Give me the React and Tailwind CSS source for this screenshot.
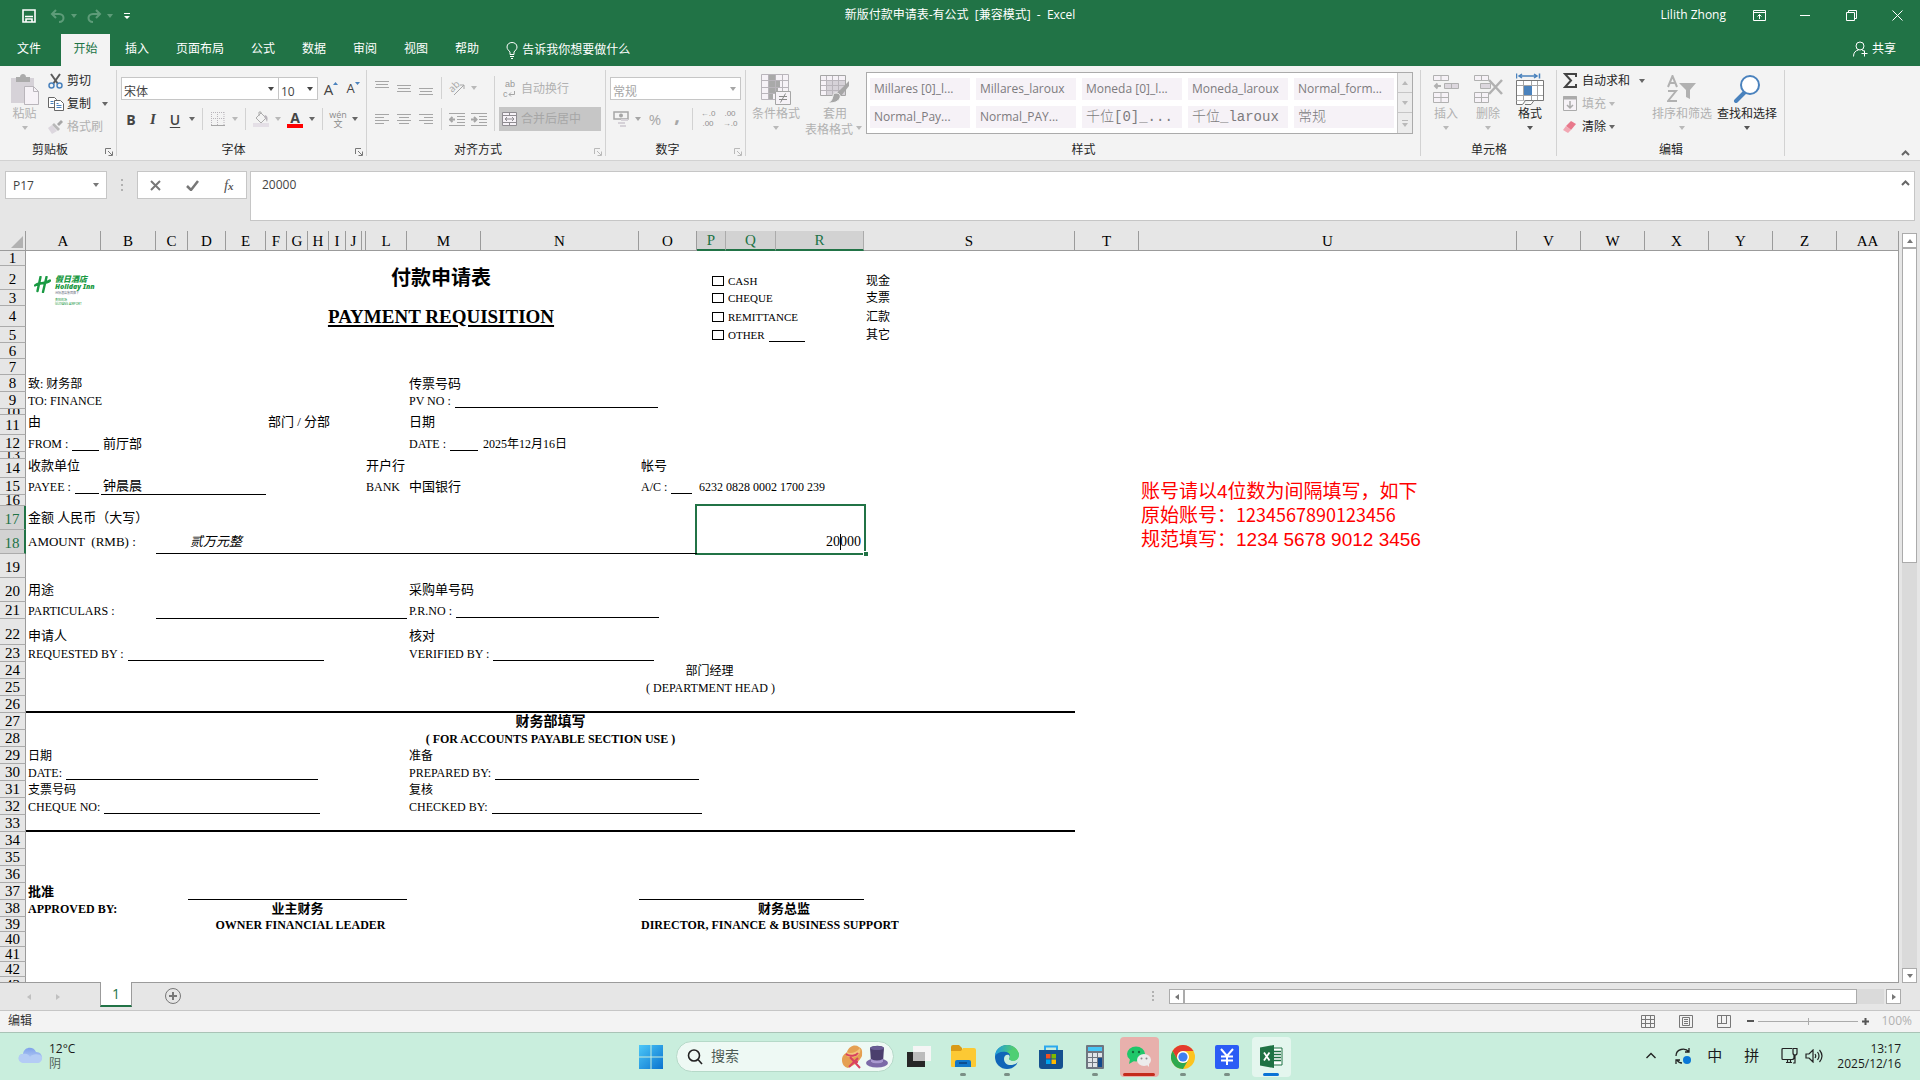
import clsx from "clsx";

const UI_FONT = "font-['Open_Sans','Noto_Sans_CJK_SC',sans-serif]";
const SHEET_FONT = "font-['Liberation_Serif','Noto_Sans_CJK_SC',serif]";

const COLUMNS = [
  ["A", 75],
  ["B", 55],
  ["C", 32],
  ["D", 38],
  ["E", 40],
  ["F", 21],
  ["G", 21],
  ["H", 21],
  ["I", 17],
  ["J", 16],
  ["K", 4],
  ["L", 41],
  ["M", 74],
  ["N", 158],
  ["O", 58],
  ["P", 29],
  ["Q", 50],
  ["R", 88],
  ["S", 211],
  ["T", 64],
  ["U", 378],
  ["V", 64],
  ["W", 64],
  ["X", 64],
  ["Y", 64],
  ["Z", 64],
  ["AA", null],
];
const NAMES = COLUMNS.map(([name]) => name);

const ROW_HEIGHTS = [
  15, 24, 16, 21, 16, 16, 16, 17, 17, 6, 20, 17, 7, 19, 17, 11, 24, 24, 24, 24,
  17, 26, 17, 17, 17, 17, 17, 17, 17, 17, 17, 17, 17, 17, 17, 17, 17, 17, 15,
  15, 15, 15, 17,
];

// cell borders: row -> [first column, last column, class]
const LINES = {
  15: [["B", "E", "border-b"]],
  18: [["C", "O", "border-b"]],
  21: [["C", "L", "border-b"]],
  26: [["A", "S", "border-b-2"]],
  33: [["A", "S", "border-b-2"]],
  37: [
    ["D", "L", "border-b"],
    ["O", "R", "border-b"],
  ],
};

const CELLS = {
  A2: { node: <HotelLogo /> },
  C2: { text: "付款申请表", cols: 14, cn: "justify-center text-[20px] font-bold" },
  C4: {
    text: "PAYMENT REQUISITION",
    cols: 14,
    cn: "justify-center text-[19px] font-bold underline decoration-2 underline-offset-2",
  },
  Q2: { node: <PayType label="CASH" />, cn: "items-end pb-0.5" },
  Q3: { node: <PayType label="CHEQUE" /> },
  Q4: { node: <PayType label="REMITTANCE" /> },
  Q5: { node: <PayType label="OTHER" />, blank: 36 },
  S2: { text: "现金", cn: "items-end pb-0.5 text-[12px]" },
  S3: { text: "支票", cn: "text-[12px]" },
  S4: { text: "汇款", cn: "text-[12px]" },
  S5: { text: "其它", cn: "text-[12px]" },
  A8: { text: "致: 财务部", cn: "text-[12px]" },
  A9: { text: "TO: FINANCE", cn: "text-[12px]" },
  M8: { text: "传票号码" },
  M9: { text: "PV NO :", cn: "text-[12px]", blank: 203 },
  A11: { text: "由", cn: "items-start" },
  F11: { text: "部门 / 分部", cn: "items-start" },
  M11: { text: "日期", cn: "items-start" },
  A12: { text: "FROM :", cn: "text-[12px]", blank: 27 },
  B12: { text: "前厅部" },
  M12: { text: "DATE :", cn: "text-[12px]", blank: 28 },
  N12: { text: "2025年12月16日", cn: "text-[12px]" },
  A14: { text: "收款单位", cn: "items-start" },
  L14: { text: "开户行", cn: "items-start px-0" },
  O14: { text: "帐号", cn: "items-start" },
  A15: { text: "PAYEE :", cn: "text-[12px]", blank: 24 },
  B15: { text: "钟晨晨" },
  L15: { text: "BANK", cn: "text-[12px] px-0" },
  M15: { text: "中国银行" },
  O15: { text: "A/C :", cn: "text-[12px]", blank: 21 },
  P15: { text: "6232 0828 0002 1700 239", cn: "text-[12px]" },
  U15: { node: <AccountNote />, rows: 4 },
  A17: { text: "金额 人民币（大写）" },
  P17: { node: <EditedCell />, cols: 3, rows: 2, cn: "items-stretch" },
  A18: { text: "AMOUNT  (RMB) :" },
  D18: { text: "贰万元整", cn: "italic" },
  A20: { text: "用途" },
  M20: { text: "采购单号码" },
  A21: { text: "PARTICULARS :", cn: "text-[12px]" },
  M21: { text: "P.R.NO :", cn: "text-[12px]", blank: 203 },
  A22: { text: "申请人", cn: "items-end pb-0.5" },
  M22: { text: "核对", cn: "items-end pb-0.5" },
  A23: { text: "REQUESTED BY :", cn: "text-[12px]", blank: 196 },
  M23: { text: "VERIFIED BY :", cn: "text-[12px]", blank: 161 },
  O24: { text: "部门经理", cols: 3, cn: "justify-center pl-1.5 text-[12px]" },
  O25: { text: "( DEPARTMENT HEAD )", cols: 3, cn: "justify-center pl-2 text-[12px]" },
  A27: { text: "财务部填写", cols: 19, cn: "justify-center text-[14px] font-bold" },
  A28: {
    text: "( FOR ACCOUNTS PAYABLE SECTION USE )",
    cols: 19,
    cn: "justify-center text-[12px] font-bold",
  },
  A29: { text: "日期", cn: "text-[12px]" },
  M29: { text: "准备", cn: "text-[12px]" },
  A30: { text: "DATE:", cn: "text-[12px]", blank: 252 },
  M30: { text: "PREPARED BY:", cn: "text-[12px]", blank: 204 },
  A31: { text: "支票号码", cn: "text-[12px]" },
  M31: { text: "复核", cn: "text-[12px]" },
  A32: { text: "CHEQUE NO:", cn: "text-[12px]", blank: 216 },
  M32: { text: "CHECKED BY:", cn: "text-[12px]", blank: 210 },
  A37: { text: "批准", cn: "font-bold" },
  A38: { text: "APPROVED BY:", cn: "text-[12px] font-bold" },
  D38: { text: "业主财务", cols: 9, cn: "justify-center font-bold" },
  Q38: { text: "财务总监", cn: "pl-8 font-bold" },
  D39: {
    text: "OWNER FINANCIAL LEADER",
    cols: 9,
    cn: "justify-center pl-2 text-[12px] font-bold",
  },
  O39: {
    text: "DIRECTOR, FINANCE & BUSINESS SUPPORT",
    cn: "text-[12px] font-bold",
  },
};

// addresses hidden under a merged cell
const COVERED = new Set();
Object.entries(CELLS).forEach(([key, { cols = 1, rows = 1 }]) => {
  const [, col, row] = key.match(/([A-Z]+)(\d+)/);
  const start = NAMES.indexOf(col);
  for (let r = 0; r < rows; r++) {
    for (let c = 0; c < cols; c++) {
      if (r || c) COVERED.add(NAMES[start + c] + (Number(row) + r));
    }
  }
});

function lineClass(index, row) {
  const hit = LINES[row]?.find(
    ([from, to]) => index >= NAMES.indexOf(from) && index <= NAMES.indexOf(to),
  );
  return hit?.[2];
}

/* ---------- sheet content ---------- */

function HotelLogo() {
  return (
    <div className="absolute top-2 left-2 flex gap-1 text-[#1a9a43]">
      <svg width="17" height="17" viewBox="0 0 17 17" className="mt-0.5">
        <path
          d="M6.5 1 3.5 15M12.5 1 9 16M1 9.5C5 5.5 11 9 16 4.5"
          fill="none"
          stroke="currentColor"
          strokeWidth="2.4"
          strokeLinecap="round"
        />
      </svg>
      <div className="font-['Noto_Sans','Noto_Sans_CJK_SC',sans-serif]">
        <div className="text-[8px] leading-[9px] font-black italic">假日酒店</div>
        <div className="text-[7px] leading-[8px] font-black italic">Holiday Inn</div>
        <div className="text-[3px] leading-[5px] text-gray-500">洲际酒店集团旗下</div>
        <div className="mt-0.5 text-[3px] leading-[4px]">贵阳机场</div>
        <div className="text-[3px] leading-[4px]">GUIYANG AIRPORT</div>
      </div>
    </div>
  );
}

function PayType({ label }) {
  return (
    <label className="relative flex items-center text-[11px]">
      <input
        type="checkbox"
        className="absolute -left-4 h-2.5 w-3 appearance-none border border-black bg-white"
      />
      {label}
    </label>
  );
}

function AccountNote() {
  return (
    <div className="font-['Liberation_Sans','Noto_Sans_CJK_SC',sans-serif] text-[19px] leading-[24px] text-[#ff0000]">
      <div>账号请以4位数为间隔填写，如下</div>
      <div>
        原始账号：
        <span className="font-['Noto_Sans_CJK_SC',sans-serif] text-[18px] leading-none">
          1234567890123456
        </span>
      </div>
      <div>规范填写：1234 5678 9012 3456</div>
    </div>
  );
}

function EditedCell() {
  return (
    <div className="relative flex w-full items-end justify-end pb-1">
      <div className="pointer-events-none absolute -inset-x-1 -top-0.5 -bottom-px border-2 border-[#217346]" />
      <div className="absolute -right-1.5 -bottom-0.5 size-[5px] border-t border-l border-white bg-[#217346]" />
      <input
        aria-label="P17"
        defaultValue="20000"
        className="w-32 pr-px text-right text-[14px] leading-[16px] outline-none"
      />
      <div className="absolute right-[21px] bottom-1 h-4 w-px bg-black" />
    </div>
  );
}

function Cell({ index, row }) {
  const key = NAMES[index] + row;
  if (COVERED.has(key)) return null;

  const cell = CELLS[key];
  const line = lineClass(index, row);
  if (!cell && !line) return <td className="p-0" />;

  const { text, node, blank, cols, rows = 1, cn } = cell ?? {};
  const height = ROW_HEIGHTS.slice(row - 1, row - 1 + rows).reduce((a, b) => a + b);

  return (
    <td className="p-0" colSpan={cols} rowSpan={rows}>
      <div
        style={{ height }}
        className={clsx(
          "relative flex gap-1 border-black leading-[14px] whitespace-pre",
          !cn?.includes("px-0") && "px-0.5",
          !cn?.includes("items-") && "items-center",
          !cn?.includes("text-[") && "text-[13px]",
          line,
          cn,
        )}
      >
        {node ?? text}
        {blank && (
          <span style={{ width: blank }} className="h-3.5 shrink-0 border-b border-black" />
        )}
      </div>
    </td>
  );
}

function Sheet() {
  return (
    <div className="min-w-0 flex-1 overflow-hidden border-r border-b border-[#9b9b9b] bg-white">
      <table className={clsx("w-full table-fixed border-collapse text-black", SHEET_FONT)}>
        <colgroup>
          <col style={{ width: 26 }} />
          {COLUMNS.map(([name, width]) => (
            <col key={name} style={width ? { width } : undefined} />
          ))}
        </colgroup>
        <thead>
          <tr>
            <th className="p-0">
              <div className="flex h-5 items-end justify-end border-r border-b border-[#9b9b9b] bg-[#e6e6e6] p-0.5">
                <svg width="12" height="12" viewBox="0 0 12 12">
                  <path d="M12 0v12H0z" fill="#b1b1b1" />
                </svg>
              </div>
            </th>
            {NAMES.map((name) => {
              const active = ["P", "Q", "R"].includes(name);
              return (
                <th key={name} className="p-0 font-normal">
                  <div
                    className={clsx(
                      "flex h-5 items-center justify-center overflow-hidden text-[15px] leading-[18px]",
                      name !== "AA" && "border-r",
                      active
                        ? "border-b-2 border-r-[#ababab] border-b-[#217346] bg-[#d2d2d2] text-[#217346]"
                        : "border-b border-[#9b9b9b] bg-[#e6e6e6]",
                    )}
                  >
                    {name !== "K" && name}
                  </div>
                </th>
              );
            })}
          </tr>
        </thead>
        <tbody>
          {ROW_HEIGHTS.map((height, i) => {
            const row = i + 1;
            const active = row === 17 || row === 18;
            return (
              <tr key={row}>
                <th className="p-0 font-normal">
                  <div
                    style={{ height }}
                    className={clsx(
                      "flex justify-center overflow-hidden border-b border-b-[#ababab] text-[15px] leading-[16px]",
                      height > 20 ? "items-end pb-0.5" : "items-center",
                      active
                        ? "border-r-2 border-r-[#217346] bg-[#d2d2d2] text-[#217346]"
                        : "border-r border-r-[#9b9b9b] bg-[#e6e6e6]",
                    )}
                  >
                    {row}
                  </div>
                </th>
                {NAMES.map((name, index) => (
                  <Cell key={name} index={index} row={row} />
                ))}
              </tr>
            );
          })}
        </tbody>
      </table>
    </div>
  );
}

/* ---------- small parts ---------- */

function Arrow({ className }) {
  return (
    <span className={clsx("flex w-3 shrink-0 justify-center", className)}>
      <svg width="6" height="4" viewBox="0 0 6 4">
        <path d="M0 0h6L3 4z" fill="currentColor" />
      </svg>
    </span>
  );
}

function Sep() {
  return <span className="mx-1 h-[22px] w-px shrink-0 bg-[#d2d2d2]" />;
}

function Tool({ label, children, className }) {
  return (
    <button
      aria-label={label}
      className={clsx("flex h-6 w-[22px] shrink-0 items-center justify-center", className)}
    >
      {children}
    </button>
  );
}

function Group({ title, launcher, className, children }) {
  return (
    <section className={clsx("relative flex shrink-0 flex-col", className)}>
      <div className="flex h-[74px]">{children}</div>
      <div
        className={clsx(
          "flex h-5 items-center justify-center text-[12px] text-[#262626]",
          launcher && "pr-[17px]",
        )}
      >
        {title}
      </div>
      {launcher && (
        <svg width="8" height="8" viewBox="0 0 8 8" className={clsx("absolute right-1 bottom-1", launcher)}>
          <path d="M.5 6V.5H6M3 3l4 4M7.5 3.5v4h-4" fill="none" stroke="currentColor" />
        </svg>
      )}
      <span className="absolute top-1 right-0 bottom-1 w-px bg-[#d2d2d2]" />
    </section>
  );
}

function BigButton({ icon, label, label2, disabled, className }) {
  return (
    <button
      className={clsx(
        "flex flex-col items-center pt-[7px] text-[12px] leading-[18px] whitespace-nowrap",
        disabled ? "text-[#b1b1b1]" : "text-[#262626]",
        className,
      )}
    >
      <span className="flex h-8 items-center">{icon}</span>
      <span>{label}</span>
      <span className="flex h-2.5 items-center leading-[14px]">
        {label2}
        <Arrow className={disabled ? "text-[#b9b9b9]" : "text-[#555]"} />
      </span>
    </button>
  );
}

function SmallButton({ icon, label, arrow, disabled }) {
  return (
    <button
      className={clsx(
        "flex h-[23px] items-center text-[12px] whitespace-nowrap",
        disabled ? "text-[#b1b1b1]" : "text-[#262626]",
      )}
    >
      <span className="flex w-[19px] shrink-0">{icon}</span>
      {label}
      {arrow && <Arrow className={clsx(arrow, disabled ? "text-[#b9b9b9]" : "text-[#666]")} />}
    </button>
  );
}

function Dropdown({ label, value, className }) {
  return (
    <div className={clsx("relative h-[23px] border border-[#c6c6c6] bg-white", className)}>
      <select
        aria-label={label}
        className="h-full w-full appearance-none pb-[3px] pl-0.5 text-[12px] leading-[18px] outline-none"
      >
        <option>{value}</option>
      </select>
      <Arrow className="pointer-events-none absolute top-[9px] right-px" />
    </div>
  );
}

function Lines({ rows, width = 14, height = 14 }) {
  return (
    <svg width={width} height={height} viewBox={`0 0 ${width} ${height}`} stroke="#a6a6a6">
      {rows.map(([x, y, w]) => (
        <path key={y} d={`M${x} ${y + 0.5}h${w}`} />
      ))}
    </svg>
  );
}

/* ---------- title bar and tabs ---------- */

function TitleBar() {
  return (
    <header className="grid h-[34px] grid-cols-[1fr_auto_1fr] items-start text-[12px] leading-[30px] text-white">
      <div className="flex h-8 items-center pl-[22px]">
        <button aria-label="保存">
          <svg width="14" height="14" viewBox="0 0 14 14">
            <path d="M1 1h12v12H1z" fill="none" stroke="#fff" strokeWidth="1.6" />
            <path d="M3 7.5h8M4 13v-3h6v3" fill="none" stroke="#fff" strokeWidth="1.6" />
          </svg>
        </button>
        <button aria-label="撤消" className="ml-3.5 flex items-center text-[#5e9c79]">
          <svg width="16" height="14" viewBox="0 0 16 14" fill="none" stroke="currentColor" strokeWidth="2">
            <path d="M6 1 2 5l4 4M2 5h7c6 0 6 8 0 8" />
          </svg>
          <Arrow className="ml-0.5" />
        </button>
        <button aria-label="恢复" className="ml-1.5 flex items-center text-[#5e9c79]">
          <svg width="16" height="14" viewBox="0 0 16 14" fill="none" stroke="currentColor" strokeWidth="2">
            <path d="m10 1 4 4-4 4M14 5H7c-6 0-6 8 0 8" />
          </svg>
          <Arrow className="ml-0.5" />
        </button>
        <button aria-label="自定义快速访问工具栏" className="ml-2">
          <svg width="6" height="6" viewBox="0 0 6 6" fill="#fff">
            <path d="M0 0h6v1H0zM0 3h6L3 6z" />
          </svg>
        </button>
      </div>
      <h1 className="whitespace-pre">新版付款申请表-有公式  [兼容模式]  -  Excel</h1>
      <div className="flex h-[30px] items-center justify-end">
        <span className="pr-2.5">Lilith Zhong</span>
        <button aria-label="功能区显示选项" className="flex w-[46px] justify-center">
          <svg width="13" height="11" viewBox="0 0 13 11" fill="none" stroke="#fff">
            <path d="M.5.5h12v10H.5zM.5 2.5h12M6.5 9V4.5M4.5 6.5l2-2 2 2" />
          </svg>
        </button>
        <button aria-label="最小化" className="flex w-[46px] justify-center">
          <span className="h-px w-2.5 bg-white" />
        </button>
        <button aria-label="还原" className="flex w-[46px] justify-center">
          <svg width="11" height="11" viewBox="0 0 11 11" fill="none" stroke="#fff">
            <path d="M.5 2.5h8v8h-8zM2.5 2V.5h8v8H9" />
          </svg>
        </button>
        <button aria-label="关闭" className="flex w-[46px] justify-center">
          <svg width="11" height="11" viewBox="0 0 11 11" stroke="#fff">
            <path d="m.5.5 10 10M10.5.5l-10 10" />
          </svg>
        </button>
      </div>
    </header>
  );
}

function Tabs() {
  return (
    <nav className="flex h-8 gap-[3px] text-[12px] text-white">
      <button className="px-[17px] pb-0.5">文件</button>
      <button className="w-[49px] bg-[#f3f3f3] pb-0.5 text-[#217346]">开始</button>
      {["插入", "页面布局", "公式", "数据", "审阅", "视图", "帮助"].map((tab) => (
        <button key={tab} className="px-3 pb-0.5">
          {tab}
        </button>
      ))}
      <button className="flex items-center gap-1 pl-3">
        <svg width="12" height="17" viewBox="0 0 12 17" fill="none" stroke="#fff">
          <path d="M4 12.5h4V10c1-1.5 3-2.5 3-5 0-6-10-6-10 0 0 2.500 2 3.500 3 5zM4 14.500h4M5 16.500h2" />
        </svg>
        告诉我你想要做什么
      </button>
      <button className="mr-6 ml-auto flex items-center gap-1 pb-0.5">
        <svg width="15" height="16" viewBox="0 0 15 16" fill="none" stroke="#fff">
          <circle cx="7" cy="5" r="4" />
          <path d="M.5 15.500c0-4 2-6 5-6.500M9 9l2 1M11.500 9.500v6M8.500 12.500h6" />
        </svg>
        共享
      </button>
    </nav>
  );
}

/* ---------- ribbon ---------- */

function ClipboardGroup() {
  return (
    <Group title="剪贴板" launcher="text-[#777]" className="w-[117px]">
      <BigButton
        disabled
        className="ml-[5px] w-[39px]"
        label="粘贴"
        icon={
          <svg width="30" height="31" viewBox="0 0 30 31">
            <path d="M1 4h23v25H1z" fill="#d6d2d8" />
            <path d="M6 3h4c0-4 6-4 6 0h4v5H6z" fill="#ababab" />
            <path d="M14.500 12.500h9l5 5v13h-14z" fill="#f6f2f7" stroke="#b9b5bb" />
            <path d="M23.500 12.500v5h5" fill="none" stroke="#b9b5bb" />
          </svg>
        }
      />
      <div className="ml-1 flex flex-col items-start pt-[3px]">
        <SmallButton
          label="剪切"
          icon={
            <svg width="15" height="16" viewBox="0 0 15 16" fill="none">
              <path d="M3 1l7 10M12 1 5 11" stroke="#5a5a5a" strokeWidth="2" />
              <circle cx="3.500" cy="12.500" r="2.500" stroke="#4a82bd" strokeWidth="1.500" />
              <circle cx="11.500" cy="12.500" r="2.500" stroke="#4a82bd" strokeWidth="1.500" />
            </svg>
          }
        />
        <SmallButton
          label="复制"
          arrow="ml-2"
          icon={
            <svg width="16" height="14" viewBox="0 0 16 14" fill="#fff" stroke="#666">
              <path d="M.5.5h6l2 2v8h-8z" />
              <path d="M6.500 3.500h6l3 3v7h-9z" />
              <path d="M2.500 4.500h3M2.500 6.500h3M8.500 8.500h5M8.500 10.500h5M8.500 6.500h2" stroke="#4a82bd" />
            </svg>
          }
        />
        <SmallButton
          disabled
          label="格式刷"
          icon={
            <svg width="15" height="14" viewBox="0 0 15 14">
              <path d="m9 4 4-4 2 2-4 4z" fill="#a6a6a6" />
              <path d="m6 3 6 6-2 2-6-6z" fill="#b9b9b9" />
              <path d="m4 5 5 6-5 3-4-6z" fill="#dcd7de" />
            </svg>
          }
        />
      </div>
    </Group>
  );
}

function FontGroup() {
  return (
    <Group title="字体" launcher="text-[#777]" className="w-[250px]">
      <div className="flex flex-col gap-1.5 pt-[11px] pl-[3px]">
        <div className="flex h-6 items-start pl-px text-[#444]">
          <Dropdown label="字体" value="宋体" className="w-[158px]" />
          <Dropdown label="字号" value="10" className="-ml-px w-[40px]" />
          <Tool label="增大字号" className="ml-0.5 text-[15px]">
            A
            <svg width="5" height="3" viewBox="0 0 5 3" className="mb-3">
              <path d="M0 3h5L2.500 0z" fill="#4a82bd" />
            </svg>
          </Tool>
          <Tool label="减小字号" className="text-[13px]">
            A
            <svg width="5" height="3" viewBox="0 0 5 3" className="mb-3">
              <path d="M0 0h5L2.500 3z" fill="#4a82bd" />
            </svg>
          </Tool>
        </div>
        <div className="flex h-6 items-center text-[14px] text-[#444]">
          <Tool label="加粗" className="font-bold">B</Tool>
          <Tool label="倾斜" className="font-['Liberation_Serif',serif] text-[15px] font-bold italic">I</Tool>
          <Tool label="下划线" className="font-semibold underline underline-offset-2">U</Tool>
          <Arrow className="text-[#666]" />
          <Sep />
          <Tool label="边框">
            <svg width="14" height="14" viewBox="0 0 14 14" fill="none" stroke="#b9b5bb">
              <path d="M.5 0v13M6.500 0v13M13 0v13M0 .5h13M0 6.500h13" strokeDasharray="1 1" />
              <path d="M0 13.500h14" stroke="#a6a6a6" />
            </svg>
          </Tool>
          <Arrow className="text-[#b9b9b9]" />
          <Sep />
          <Tool label="填充颜色" className="w-6">
            <svg width="16" height="16" viewBox="0 0 16 16">
              <path d="M0 12h16v4H0z" fill="#e4dfe6" />
              <path d="m3 7 5-5 5 5-5 5zM6 5V1h2v2" fill="#f3f3f3" stroke="#ababab" />
              <path d="M12 4c3 1 3 4 2 7-1-2-1-3-3-5z" fill="#b9b5bb" />
            </svg>
          </Tool>
          <Arrow className="text-[#b9b9b9]" />
          <Tool label="字体颜色" className="w-5 flex-col">
            <span className="text-[14px] leading-[13px] font-bold">A</span>
            <span className="h-1 w-4 bg-[#ff0000]" />
          </Tool>
          <Arrow className="text-[#666]" />
          <Sep />
          <Tool label="显示或隐藏拼音字段" className="w-6 flex-col text-[#8a8a8a]">
            <span className="text-[9px] leading-[9px]">wén</span>
            <span className="text-[9px] leading-[10px]">文</span>
          </Tool>
          <Arrow className="text-[#666]" />
        </div>
      </div>
    </Group>
  );
}

function AlignGroup() {
  return (
    <Group title="对齐方式" launcher="text-[#b9b9b9]" className="w-[239px]">
      <div className="flex w-[123px] flex-col gap-1.5 pt-[11px] pl-1 text-[#b9b9b9]">
        <div className="flex h-6 items-center pb-0.5">
          <Tool label="顶端对齐"><Lines rows={[[0, 0, 14], [1, 3, 12], [0, 6, 14]]} /></Tool>
          <Tool label="垂直居中"><Lines rows={[[0, 4, 14], [1, 7, 12], [0, 10, 14]]} /></Tool>
          <Tool label="底端对齐"><Lines rows={[[0, 7, 14], [1, 10, 12], [0, 13, 14]]} /></Tool>
          <Sep />
          <Tool label="方向" className="w-5">
            <svg width="18" height="18" viewBox="0 0 18 18" className="overflow-visible">
              <text x="1" y="12" fontSize="10" fill="#a6a6a6" transform="rotate(-45 5 9)">ab</text>
              <path d="m6 16 10-10M16 10V6h-4" fill="none" stroke="#a6a6a6" />
            </svg>
          </Tool>
          <Arrow />
        </div>
        <div className="flex h-6 items-center">
          <Tool label="左对齐"><Lines rows={[[0, 2, 14], [0, 5, 9], [0, 8, 14], [0, 11, 9]]} /></Tool>
          <Tool label="居中"><Lines rows={[[0, 2, 14], [2, 5, 10], [0, 8, 14], [2, 11, 10]]} /></Tool>
          <Tool label="右对齐"><Lines rows={[[0, 2, 14], [5, 5, 9], [0, 8, 14], [5, 11, 9]]} /></Tool>
          <Sep />
          {["M6 6.500H1M3.500 4 1 6.500 3.500 9", "M0 6.500h5M3 4l2.500 2.500L3 9"].map((d, i) => (
            <Tool key={d} label={i ? "增加缩进量" : "减少缩进量"}>
              <svg width="16" height="13" viewBox="0 0 16 13" fill="none" stroke="#a6a6a6">
                <path d="M0 .5h16M8 3.500h8M8 6.500h8M8 9.500h8M0 12.500h16" />
                <path d={d} strokeWidth="2" />
              </svg>
            </Tool>
          ))}
        </div>
      </div>
      <span className="mx-1 mt-2.5 h-[55px] w-px bg-[#d2d2d2]" />
      <div className="flex flex-col gap-1.5 pt-[11px] text-[12px] text-[#b1b1b1]">
        <button className="flex h-6 items-center gap-1 pl-1">
          <span className="flex w-3.5 flex-col font-['Liberation_Sans',sans-serif] text-[9px] leading-[10px] text-[#999]">
            <span>ab</span>
            <span className="flex items-center">
              c
              <svg width="7" height="6" viewBox="0 0 7 6" fill="none" stroke="#a6a6a6">
                <path d="M6.500 0v3.500H1M3 1.500l-2 2 2 2" />
              </svg>
            </span>
          </span>
          自动换行
        </button>
        <button className="flex h-6 w-[102px] items-center gap-1 bg-[#c6c6c6] pl-[3px] text-[#a6a6a6]">
          <svg width="15" height="14" viewBox="0 0 15 14" fill="#f6f2f7" stroke="#8f8c91">
            <path d="M.5.500h14v13H.5zM.5 3.500h14M.5 10.500h14M7.500.500v3M7.500 10.500v3M3 7h9M5 5 3 7l2 2M10 5l2 2-2 2" />
          </svg>
          合并后居中
        </button>
      </div>
    </Group>
  );
}

function NumberGroup() {
  return (
    <Group title="数字" launcher="text-[#b9b9b9]" className="w-[140px]">
      <div className="flex flex-col gap-1.5 px-1 pt-[11px] text-[#a6a6a6]">
        <div className="h-6">
          <Dropdown label="数字格式" value="常规" className="w-[131px]" />
        </div>
        <div className="flex h-6 items-center">
          <Tool label="会计数字格式">
            <svg width="16" height="16" viewBox="0 0 16 16">
              <path d="M1 1h14v7H1z" fill="#f3f3f3" stroke="#a6a6a6" strokeWidth="1.500" />
              <circle cx="8" cy="4.500" r="2" fill="#a6a6a6" />
              <path d="M8 8h7v2H8zM5 11h7v2H5zM7 14h6v2H7z" fill="#d6d2d8" />
            </svg>
          </Tool>
          <Arrow />
          <Tool label="百分比样式" className="text-[15px]">%</Tool>
          <Tool label="千位分隔样式" className="pb-2 text-[20px] font-bold">,</Tool>
          <Sep />
          {[["←.0", ".00", "增加小数位数"], [".00", "→.0", "减少小数位数"]].map(([a, b, label]) => (
            <Tool
              key={label}
              label={label}
              className="flex-col font-['Liberation_Sans',sans-serif] text-[8px] leading-[10px] text-[#8f8f8f]"
            >
              <span>{a}</span>
              <span>{b}</span>
            </Tool>
          ))}
        </div>
      </div>
    </Group>
  );
}

const STYLES = [
  "Millares [0]_l...",
  "Millares_laroux",
  "Moneda [0]_l...",
  "Moneda_laroux",
  "Normal_form...",
  "Normal_Pay...",
  "Normal_PAY...",
  "千位[0]_...",
  "千位_laroux",
  "常规",
];

function StylesGroup() {
  return (
    <Group title="样式" className="w-[675px]">
      <BigButton
        disabled
        className="ml-0.5 w-14"
        label="条件格式"
        icon={
          <svg width="30" height="31" viewBox="0 0 30 31">
            <path d="M.5.500h27v25H.5z" fill="#f6f2f7" stroke="#b9b5bb" />
            <path d="M8 1h6v5H8zM8 7h11v6H8zM8 14h9v5H8zM8 20h4v5H8z" fill="#a9a9a9" />
            <path d="M7.500 1v24M14.500 1v24M21.500 1v24M1 6.500h26M1 13.500h26M1 19.500h26" stroke="#b9b5bb" />
            <path d="M14.500 17.500h15v13h-15z" fill="#f6f2f7" stroke="#a6a6a6" />
            <path d="M18 22.500h8M18 25.500h8M24.500 19.500l-5 9" stroke="#8a8a8a" />
          </svg>
        }
      />
      <BigButton
        disabled
        className="ml-0.5 w-[58px]"
        label="套用"
        label2={<span className="pt-1">表格格式</span>}
        icon={
          <svg width="30" height="28" viewBox="0 0 30 28">
            <path d="M.5.500h25v20H.5z" fill="#f6f2f7" stroke="#a6a6a6" />
            <path d="M7 6h18v14H7z" fill="#d6d2d8" />
            <path d="M6.500 1v19M12.500 1v19M18.500 1v19M1 5.500h24M1 10.500h24M1 15.500h24" stroke="#b9b5bb" />
            <path d="M29 6v5l-8 10-4-3z" fill="#a6a6a6" />
            <path d="M16 18c3 0 5 2 4 5-2 4-6 5-12 5 4-2 4-4 5-7 0-2 1-3 3-3z" fill="#a6a6a6" stroke="#f3f3f3" />
          </svg>
        }
      />
      <div className="mt-1.5 ml-0.5 flex h-[62px] border border-[#ababab] bg-white">
        <div className="grid grid-cols-5 gap-1.5 px-[3px] py-[5px]">
          {STYLES.map((name) => (
            <button
              key={name}
              className={clsx(
                "h-[22px] w-[100px] bg-[#f6f2f7] pl-1 text-left whitespace-nowrap text-[#7d7b7e]",
                /[一-龥]/.test(name)
                  ? "font-['Liberation_Mono','Noto_Sans_CJK_SC',monospace] text-[14px] leading-[20px] font-light"
                  : "text-[12px]",
              )}
            >
              {name}
            </button>
          ))}
        </div>
        <div className="grid w-[15px] grid-rows-3 divide-y divide-[#c6c6c6] border-l border-[#c6c6c6] bg-[#ececec] text-[#b9b9b9]">
          <button aria-label="上一行" className="flex items-center justify-center">
            <Arrow className="rotate-180" />
          </button>
          <button aria-label="下一行" className="flex items-center justify-center">
            <Arrow />
          </button>
          <button aria-label="其他" className="flex flex-col items-center justify-center gap-0.5">
            <span className="h-px w-1.5 bg-[#b9b9b9]" />
            <Arrow />
          </button>
        </div>
      </div>
    </Group>
  );
}

function CellsGroup() {
  return (
    <Group title="单元格" className="w-[136px]">
      <BigButton
        disabled
        className="ml-1 w-[42px]"
        label="插入"
        icon={
          <svg width="27" height="28" viewBox="0 0 27 28" fill="#f6f2f7" stroke="#b1b1b1">
            <path d="M.5.500h15v5H.5zM8 1v5M.5 17.500h15v10H.5zM8 18v9M1 22.500h14" />
            <path d="M11.500 8.500h14v5h-14zM18.500 9v4" fill="#dcd7de" />
            <path d="M8 11H2M4.500 8.500 2 11l2.500 2.500" strokeWidth="2" fill="none" />
          </svg>
        }
      />
      <BigButton
        disabled
        className="w-[42px]"
        label="删除"
        icon={
          <svg width="29" height="28" viewBox="0 0 29 28" fill="#f6f2f7" stroke="#b1b1b1">
            <path d="M.5.500h14v5H.5zM7.500 1v5M.5 17.500h14v10H.5zM7.500 18v9M1 22.500h13" />
            <path d="M6.500 8.500h10v5h-10z" fill="#dcd7de" />
            <path d="m15 5 13 14M28 5 15 19" strokeWidth="2.500" />
          </svg>
        }
      />
      <BigButton
        className="w-[42px]"
        label="格式"
        icon={
          <svg width="28" height="32" viewBox="0 0 28 32">
            <path d="M.5.500v5M23.500.500v5M3 3h18M6 1 3 3l3 2M18 1l3 2-3 2" fill="none" stroke="#4a82bd" strokeWidth="1.500" />
            <path d="M.5 7.500h27v20H.5z" fill="#fff" stroke="#777" />
            <path d="M7.500 8v19M15.500 8v19M21.500 8v19M1 12.500h26M1 22.500h26" stroke="#a6a6a6" />
            <path d="M8 13h8v9H8z" fill="#4a82bd" />
            <path d="M.5 27.500v4h6l3-4M9 31.500h6l3-4" fill="#fff" stroke="#777" />
          </svg>
        }
      />
    </Group>
  );
}

function EditGroup() {
  return (
    <Group title="编辑" className="w-[228px]">
      <div className="flex w-[93px] flex-col items-start pt-[3px] pl-1.5">
        <SmallButton
          label="自动求和"
          arrow="ml-1.5"
          icon={
            <svg width="14" height="15" viewBox="0 0 14 15" fill="none" stroke="#444" strokeWidth="2">
              <path d="M13 4V1H2l6 6.500L2 14h11v-3" />
            </svg>
          }
        />
        <SmallButton
          disabled
          label="填充"
          arrow
          icon={
            <svg width="14" height="15" viewBox="0 0 14 15" fill="#f6f2f7" stroke="#ababab">
              <path d="M.5.500h13v14H.5z" />
              <path d="M0 2h14" strokeWidth="3" />
              <path d="M7 5v7M4 9l3 3 3-3" strokeWidth="1.500" fill="none" />
            </svg>
          }
        />
        <SmallButton
          label="清除"
          arrow
          icon={
            <svg width="13" height="12" viewBox="0 0 13 12">
              <path d="m8 0 5 3-5 6-5-4z" fill="#e8788b" />
              <path d="m3 5 5 4-3 3-5-3z" fill="#f2a7b3" />
            </svg>
          }
        />
      </div>
      <BigButton
        disabled
        className="w-16"
        label="排序和筛选"
        icon={
          <svg width="30" height="28" viewBox="0 0 30 28" fill="none" stroke="#b1b1b1" strokeWidth="2">
            <path d="M1 12 5.500 1 10 12M3 8h5M1 16h8L1 26h9" />
            <path d="M12 8h17l-6 7v9l-4-2v-7z" fill="#b1b1b1" stroke="none" />
          </svg>
        }
      />
      <BigButton
        className="w-[66px]"
        label="查找和选择"
        icon={
          <svg width="28" height="28" viewBox="0 0 28 28" stroke="#4a82bd">
            <path d="m12 17-9 9" strokeWidth="4" strokeLinecap="round" />
            <circle cx="17" cy="10" r="9" fill="#fff" strokeWidth="2" />
          </svg>
        }
      />
    </Group>
  );
}

function Ribbon() {
  return (
    <div className="relative flex h-[95px] overflow-hidden border-b border-[#d2d2d2] bg-[#f3f3f3]">
      <ClipboardGroup />
      <FontGroup />
      <AlignGroup />
      <NumberGroup />
      <StylesGroup />
      <CellsGroup />
      <EditGroup />
      <button aria-label="折叠功能区" className="mr-2.5 mb-1 ml-auto self-end">
        <Chevron />
      </button>
    </div>
  );
}

function Chevron() {
  return (
    <svg width="9" height="6" viewBox="0 0 9 6" fill="none" stroke="#666" strokeWidth="2">
      <path d="m1 5 3.500-3.500L8 5" />
    </svg>
  );
}

function FormulaBar() {
  return (
    <div className="flex h-[70px] items-start pt-2.5 pr-[5px] pl-[5px] text-[12px] text-[#444]">
      <div className="relative h-7 w-[102px] border border-[#c6c6c6] bg-white">
        <input aria-label="名称框" defaultValue="P17" className="h-full w-20 pl-[7px] outline-none" />
        <Arrow className="absolute top-[11px] right-1 text-[#777]" />
      </div>
      <div className="mx-3.5 mt-2 flex w-0.5 flex-col gap-[3px]">
        <span className="size-0.5 bg-[#b1b1b1]" />
        <span className="size-0.5 bg-[#b1b1b1]" />
        <span className="size-0.5 bg-[#b1b1b1]" />
      </div>
      <div className="flex h-7 w-[110px] items-center justify-around border border-[#c6c6c6] bg-white">
        <button aria-label="取消">
          <svg width="11" height="11" viewBox="0 0 11 11" stroke="#777" strokeWidth="2">
            <path d="m1 1 9 9M10 1l-9 9" />
          </svg>
        </button>
        <button aria-label="输入">
          <svg width="13" height="11" viewBox="0 0 13 11" fill="none" stroke="#777" strokeWidth="2.500">
            <path d="m1 6 4 4 7-9" />
          </svg>
        </button>
        <button
          aria-label="插入函数"
          className="font-['Liberation_Serif',serif] text-[15px] leading-[16px] text-[#555] italic"
        >
          f<span className="text-[11px] font-bold">x</span>
        </button>
      </div>
      <div className="ml-[3px] flex h-[50px] flex-1 items-start justify-between border border-[#c6c6c6] bg-white pt-1 pr-1">
        <input aria-label="编辑栏" defaultValue="20000" className="h-[18px] flex-1 pl-[11px] outline-none" />
        <button aria-label="折叠编辑栏" className="mt-1 leading-[10px]">
          <Chevron />
        </button>
      </div>
    </div>
  );
}

/* ---------- scroll bars, sheet tabs, status ---------- */

function ScrollButton({ label, className, turn }) {
  return (
    <button
      aria-label={label}
      className={clsx(
        "flex shrink-0 items-center justify-center border border-[#ababab] bg-white text-[#777]",
        className,
      )}
    >
      <Arrow className={turn} />
    </button>
  );
}

function VerticalScroll() {
  return (
    <div className="flex w-[21px] flex-col px-[3px] pt-0.5">
      <ScrollButton label="向上滚动" className="h-[15px]" turn="rotate-180" />
      <div className="flex-1 bg-[#dadada]">
        <div className="h-[315px] border border-[#ababab] bg-white" />
      </div>
      <ScrollButton label="向下滚动" className="h-[15px]" />
    </div>
  );
}

function SheetTabs() {
  return (
    <div className="flex h-7 items-start border-b border-[#c6c6c6]">
      <div className="flex h-full w-[100px] items-center gap-[17px] pl-[23px] text-[#c0c0c0]">
        <button aria-label="上一张工作表"><Arrow className="rotate-90" /></button>
        <button aria-label="下一张工作表"><Arrow className="-rotate-90" /></button>
      </div>
      <button className="-mt-px h-[25px] w-8 border-x border-b-2 border-x-[#9b9b9b] border-b-[#217346] bg-white text-[14px] text-[#217346]">
        1
      </button>
      <button aria-label="新工作表" className="mt-1 ml-8">
        <svg width="18" height="18" viewBox="0 0 18 18" fill="none" stroke="#777">
          <circle cx="9" cy="9" r="7.500" />
          <path d="M9 5v8M5 9h8" strokeWidth="2" />
        </svg>
      </button>
      <div className="mt-2 mr-[15px] ml-auto flex flex-col gap-0.5">
        <span className="size-0.5 bg-[#b1b1b1]" />
        <span className="size-0.5 bg-[#b1b1b1]" />
        <span className="size-0.5 bg-[#b1b1b1]" />
      </div>
      <div className="mt-1.5 mr-[19px] flex h-[15px] w-[732px] max-w-[40%]">
        <ScrollButton label="向左滚动" className="w-[15px]" turn="rotate-90" />
        <div className="mr-0.5 flex-1 bg-[#dadada] pr-[27px]">
          <div className="h-full border border-[#ababab] bg-white" />
        </div>
        <ScrollButton label="向右滚动" className="w-[15px]" turn="-rotate-90" />
      </div>
    </div>
  );
}

function StatusBar() {
  return (
    <div className="flex h-[22px] items-center border-b border-[#a9c3b6] bg-[#f3f3f3] px-2 pb-px text-[12px] text-[#333]">
      编辑
      <div className="ml-auto flex items-center">
        <button aria-label="普通" className="mr-6">
          <svg width="14" height="13" viewBox="0 0 14 13" fill="none" stroke="#777">
            <path d="M.5.500h13v12H.5zM4.500 0v13M9.500 0v13M0 4.500h14M0 8.500h14" />
          </svg>
        </button>
        <button aria-label="页面布局" className="mr-6">
          <svg width="14" height="13" viewBox="0 0 14 13" fill="none" stroke="#777">
            <path d="M.5.500h13v12H.5zM3.500 2.500h7v8h-7zM5 4.500h4M5 6.500h4M5 8.500h4" />
          </svg>
        </button>
        <button aria-label="分页预览" className="mr-4">
          <svg width="14" height="13" viewBox="0 0 14 13" fill="none" stroke="#777">
            <path d="M.5.500h13v12H.5zM4.500 0v8M9.500 0v8M0 8.500h10" />
          </svg>
        </button>
        <button aria-label="缩小" className="h-0.5 w-[7px] bg-[#555]" />
        <input
          type="range"
          aria-label="显示比例"
          className="mx-1 h-px w-[100px] appearance-none bg-[#ababab] [&::-webkit-slider-thumb]:h-[7px] [&::-webkit-slider-thumb]:w-px [&::-webkit-slider-thumb]:appearance-none [&::-webkit-slider-thumb]:bg-[#ababab]"
        />
        <button aria-label="放大">
          <svg width="7" height="7" viewBox="0 0 7 7" stroke="#555" strokeWidth="2">
            <path d="M0 3.500h7M3.500 0v7" />
          </svg>
        </button>
        <span className="ml-3 text-[#b1b1b1]">100%</span>
      </div>
    </div>
  );
}

/* ---------- taskbar ---------- */

function TaskIcon({ label, running, children, className }) {
  return (
    <button aria-label={label} className="relative flex h-full w-11 items-center justify-center">
      <span className={clsx("flex h-10 w-[39px] items-center justify-center rounded", className)}>
        {children}
      </span>
      {running && <span className={clsx("absolute bottom-1 h-[3px] rounded-full", running)} />}
    </button>
  );
}

const DOT = "w-1.5 bg-[#7b8f86]";

function Taskbar() {
  return (
    <footer className="grid h-[47px] grid-cols-[1fr_auto_1fr] items-center bg-[#c9eedd] text-[12px] text-[#1b1b1b]">
      <button className="flex items-center gap-1.5 justify-self-start pb-0.5 pl-[18px] text-left leading-[15px]">
        <svg width="25" height="17" viewBox="0 0 25 17">
          <defs>
            <linearGradient id="cloud" x1="0" y1="0" x2="0" y2="1">
              <stop offset="0" stopColor="#7fa2ea" />
              <stop offset="1" stopColor="#c3d7f8" />
            </linearGradient>
          </defs>
          <path d="M6 16c-7 0-7-9-1-9C6-1 16-1 18 5c8 0 8 11 1 11z" fill="url(#cloud)" />
          <path d="M6 16c-7 0-7-9-1-9 4-1 6 1 7 3 2-3 9-4 12 0 0 4-2 6-5 6z" fill="#b4ccf5" />
        </svg>
        <span>
          12°C
          <br />
          <span className="text-[#52645c]">阴</span>
        </span>
      </button>

      <div className="flex h-[47px] items-center pl-0.5">
        <TaskIcon label="开始">
          <svg width="24" height="24" viewBox="0 0 24 24">
            <defs>
              <linearGradient id="win" x1="0" y1="0" x2="1" y2="1">
                <stop offset="0" stopColor="#4cc8f8" />
                <stop offset="1" stopColor="#0a73cf" />
              </linearGradient>
            </defs>
            <path d="M0 0h11.500v11.500H0zM12.500 0H24v11.500H12.500zM0 12.500h11.500V24H0zM12.500 12.500H24V24H12.500z" fill="url(#win)" />
          </svg>
        </TaskIcon>
        <div className="mx-[3px] flex h-[31px] w-[218px] items-center rounded-full border border-[#b5d9c8] bg-[#eef9f4] pr-1 pl-2.5">
          <svg width="16" height="16" viewBox="0 0 16 16" fill="none" stroke="#222" strokeWidth="1.600" className="shrink-0">
            <circle cx="7" cy="6.500" r="5.500" />
            <path d="m11 10.500 4 4.500" />
          </svg>
          <input
            aria-label="搜索"
            placeholder="搜索"
            className="ml-2 min-w-0 flex-1 pb-0.5 text-[14px] outline-none placeholder:text-[#4c5a54]"
          />
          <svg width="48" height="24" viewBox="0 0 48 24" className="shrink-0">
            <path d="M1 15C1 10 4 9 6 7c2-6 8-8 12-5 4 2 3 5 3 9-2 5-9 10-14 12-4-1-6-4-6-8z" fill="#e5a052" />
            <path d="M6 7c3 2 9 1 13-4 1 3 0 6-3 8-4 2-8 2-10 0z" fill="#f3c47c" />
            <path d="M5 9c4 3 10 2 12-1M9 12l10 11M17 13 8 22M12 16l5 1" fill="none" stroke="#d9425f" strokeWidth="2" />
            <ellipse cx="36" cy="18" rx="11" ry="4.500" fill="#7c6aa8" />
            <path d="M29 3c3-3 12-3 14 0l-1 14c-3 2-9 2-12 0z" fill="#4b3f6d" />
            <path d="M30 14c4 2 8 2 12 0v3c-3 2-9 2-12 0z" fill="#a99ad0" />
            <ellipse cx="36" cy="3" rx="7" ry="2" fill="#6b5c95" />
          </svg>
        </div>
        <TaskIcon label="任务视图">
          <svg width="24" height="24" viewBox="0 0 24 24">
            <path d="M0 7h18v15H0z" fill="#262626" />
            <path d="M6 1h18v15H6z" fill="#f5f5f5" />
            <path d="M6 7h12v9H6z" fill="#bcbcbc" />
          </svg>
        </TaskIcon>
        <TaskIcon label="文件资源管理器" running={DOT}>
          <svg width="25" height="23" viewBox="0 0 25 23">
            <path d="M0 2q0-2 2-2h6l3 3v5H0z" fill="#d99a17" />
            <path d="M0 6h10l2-3h11q2 0 2 2v16q0 1-1 1H1q-1 0-1-1z" fill="#fcc934" />
            <path d="M4 22v-5q0-2 2-2h12q2 0 2 2v5z" fill="#1277c9" />
            <path d="M8 18h8" stroke="#0d4f91" strokeWidth="2" />
          </svg>
        </TaskIcon>
        <TaskIcon label="Edge" running={DOT}>
          <svg width="24" height="24" viewBox="0 0 24 24">
            <defs>
              <linearGradient id="edge" x1="0" y1="0" x2="1" y2="0">
                <stop offset="0" stopColor="#1f9be0" />
                <stop offset="1" stopColor="#5fd952" />
              </linearGradient>
            </defs>
            <circle cx="12" cy="12" r="12" fill="#1065b8" />
            <path d="M0 11C1-3 22-4 24 10c0 7-8 7-10 4 3-3 1-7-3-7C6 6 2 8 0 11z" fill="url(#edge)" />
            <path d="M9 14c0 6 7 8 13 4l2-2V9c0 8-8 8-10 5 1-1 1-3 0-4-3-1-5 1-5 4z" fill="#c9eedd" />
            <path d="M24 9c0 7-7 8-10 5 2-3 1-6-2-7 5-4 11-2 12 2z" fill="#4fcf74" />
          </svg>
        </TaskIcon>
        <TaskIcon label="Microsoft Store">
          <svg width="24" height="24" viewBox="0 0 24 24">
            <path d="M6 6V1.500h12V6" fill="none" stroke="#2ca9ee" strokeWidth="2" />
            <path d="M0 5h24v16q0 3-3 3H3q-3 0-3-3z" fill="#14508f" />
            <path d="M7 9h4.500v4.500H7z" fill="#f25022" />
            <path d="M12.500 9H17v4.500h-4.500z" fill="#7fba00" />
            <path d="M7 14.500h4.500V19H7z" fill="#00a4ef" />
            <path d="M12.500 14.500H17V19h-4.500z" fill="#ffb900" />
          </svg>
        </TaskIcon>
        <TaskIcon label="计算器" running={DOT}>
          <svg width="18" height="24" viewBox="0 0 18 24">
            <rect width="18" height="24" rx="1" fill="#6e7680" />
            <path d="M2 2h14v4H2z" fill="#47c6f5" />
            <path d="M2 8h4v4H2zM7 8h4v4H7zM12 8h4v4h-4zM2 13h4v4H2zM7 13h4v4H7zM2 18h4v4H2zM7 18h4v4H7z" fill="#dfe4e8" />
            <path d="M12 13h4v9h-4z" fill="#12498c" />
          </svg>
        </TaskIcon>
        <TaskIcon label="微信" running="w-8 bg-[#c42b1c]" className="bg-[#e8b0ac]">
          <svg width="24" height="22" viewBox="0 0 24 22">
            <ellipse cx="9" cy="8" rx="9" ry="7.500" fill="#1fc76a" />
            <path d="m3 13-1 5 5-3z" fill="#1fc76a" />
            <ellipse cx="17" cy="14" rx="7" ry="6" fill="#ececec" />
            <path d="m19 18 3 3v-4z" fill="#ececec" />
            <circle cx="6" cy="6" r="1.200" fill="#136b39" />
            <circle cx="12" cy="6" r="1.200" fill="#136b39" />
            <circle cx="14.500" cy="12.500" r="1" fill="#8a8a8a" />
            <circle cx="19.500" cy="12.500" r="1" fill="#8a8a8a" />
          </svg>
        </TaskIcon>
        <TaskIcon label="Chrome" running={DOT}>
          <svg width="24" height="24" viewBox="0 0 24 24">
            <circle cx="12" cy="12" r="12" fill="#fcc31e" />
            <path d="M1.600 6A12 12 0 0 1 22.400 6H12a6 6 0 0 0-5.200 9z" fill="#e33b2e" />
            <path d="M1.600 6A12 12 0 0 0 12 24l5.200-9a6 6 0 0 1-10.400 0z" fill="#2da94f" />
            <circle cx="12" cy="12" r="6" fill="#fff" />
            <circle cx="12" cy="12" r="4.600" fill="#3f7ff0" />
          </svg>
        </TaskIcon>
        <TaskIcon label="税务" running={DOT}>
          <svg width="24" height="24" viewBox="0 0 24 24">
            <rect width="24" height="24" rx="2" fill="#2b5cf5" />
            <path d="m6 4 6 7 6-7M12 11v9M6 11.500h12M6 15.500h12" fill="none" stroke="#fff" strokeWidth="2" />
          </svg>
        </TaskIcon>
        <TaskIcon label="Excel" running="w-4 bg-[#0a73d6]" className="bg-[#e4f6ee]">
          <svg width="23" height="23" viewBox="0 0 23 23">
            <path d="M12 3h10v17H12z" fill="#fff" stroke="#1f7244" />
            <path d="M14 6.500h7M14 9.500h7M14 12.500h7M14 15.500h7" stroke="#1f7244" strokeWidth="1.500" />
            <path d="M0 2.500 14 0v23L0 20.500z" fill="#1f7244" />
            <path d="m4 7.500 5.500 8M9.500 7.500 4 15.500" stroke="#fff" strokeWidth="1.800" />
          </svg>
        </TaskIcon>
      </div>

      <div className="flex items-center justify-self-end pr-[19px] pb-0.5">
        <svg width="10" height="7" viewBox="0 0 10 7" fill="none" stroke="#222" strokeWidth="1.400">
          <path d="m.5 6 4.500-4.500L9.500 6" />
        </svg>
        <svg width="18" height="18" viewBox="0 0 18 18" fill="none" stroke="#222" strokeWidth="1.300" className="ml-[18px]">
          <path d="M2 9c0-7 9-9 13-4M15 1v4h-4M2 17v-4h4M3 13c1 2 3 3 5 3" />
          <circle cx="13" cy="13" r="4" fill="#0a78d7" stroke="none" />
        </svg>
        <span className="ml-[15px] text-[15px]">中</span>
        <span className="ml-[22px] text-[15px]">拼</span>
        <svg width="17" height="17" viewBox="0 0 17 17" fill="none" stroke="#222" strokeWidth="1.200" className="ml-[22px]">
          <path d="M11 1.500H2q-1 0-1 1v9q0 1 1 1h9q2 0 2-2V8M5 15.500h6M6.500 13v2M9.500 13v2M12 1.500h4V6q0 2-2 2t-2-2zM14 8v8h-2" />
        </svg>
        <svg width="18" height="14" viewBox="0 0 18 14" fill="none" stroke="#222" strokeWidth="1.200" className="ml-[7px]">
          <path d="M1 5h3l4-4v12L4 9H1zM10 5q1.500 2 0 4M12.500 3q3 4 0 8M14.500 1q5 6 0 12" />
        </svg>
        <span className="ml-3.5 text-right leading-[15px]">
          13:17
          <br />
          2025/12/16
        </span>
      </div>
    </footer>
  );
}

export default function App() {
  return (
    <div className={clsx("flex h-screen flex-col overflow-hidden bg-[#e6e6e6]", UI_FONT)}>
      <div className="bg-[#217346]">
        <TitleBar />
        <Tabs />
      </div>
      <Ribbon />
      <FormulaBar />
      <main className="flex min-h-0 flex-1">
        <Sheet />
        <VerticalScroll />
      </main>
      <SheetTabs />
      <StatusBar />
      <Taskbar />
    </div>
  );
}
